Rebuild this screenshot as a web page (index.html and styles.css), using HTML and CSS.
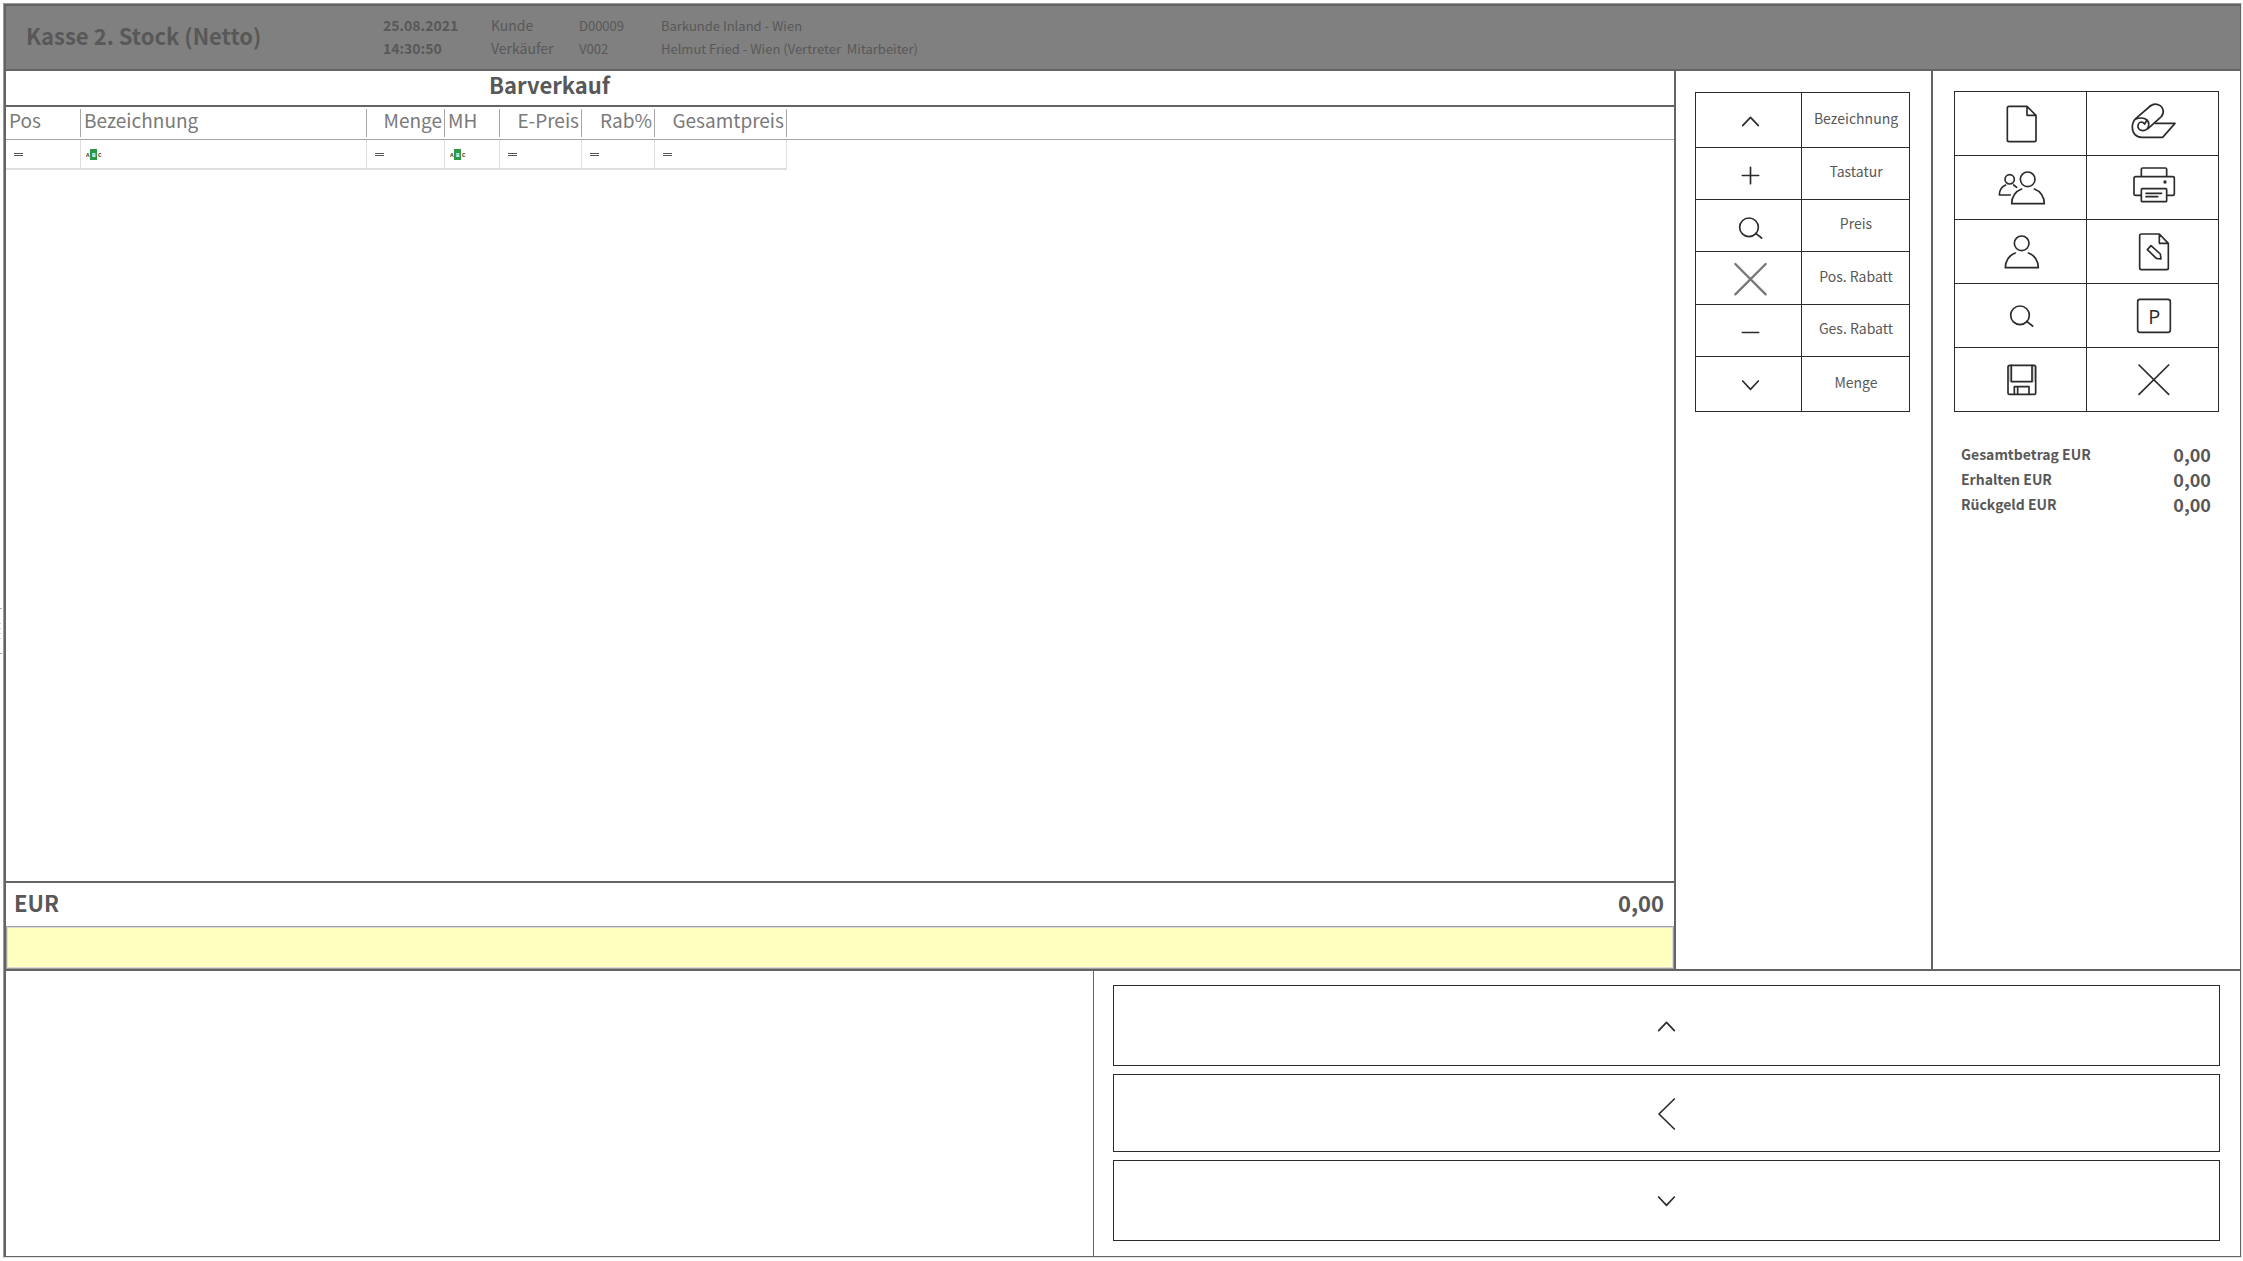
FILE: index.html
```html
<!DOCTYPE html>
<html lang="de">
<head>
<meta charset="utf-8">
<title>Kasse 2. Stock (Netto)</title>
<link rel="stylesheet" href="styles.css">
</head>
<body>
<svg class="defs" aria-hidden="true">
  <symbol id="i-search" viewBox="0 0 147 147"><circle cx="69" cy="73" r="28"/><path d="M89 91L107 105"/></symbol>
  <symbol id="i-up" viewBox="0 0 147 147"><path d="M50 86L73.500 61L97 86"/></symbol>
  <symbol id="i-down" viewBox="0 0 147 147"><path d="M50 60L73.500 85L97 60"/></symbol>
  <symbol id="i-equals" viewBox="0 0 9 3"><path class="solid" d="M0 0H9V1H0ZM0 2H9V3H0Z"/></symbol>
</svg>
<div class="splitter"><i></i><i></i><i></i><i></i></div>
<div class="frame">
  <header class="topbar">
    <h1>Kasse 2. Stock (Netto)</h1>
    <div class="info">
      <b>25.08.2021</b><span>Kunde</span><span class="small">D00009</span><span class="small">Barkunde Inland - Wien</span>
      <b>14:30:50</b><span>Verkäufer</span><span class="small">V002</span><span class="small">Helmut Fried - Wien (Vertreter&nbsp; Mitarbeiter)</span>
    </div>
  </header>

  <main class="work">
    <section class="sale">
      <h2>Barverkauf</h2>
      <div class="positions">
        <table>
          <colgroup><col class="c-pos"><col class="c-name"><col class="c-qty"><col class="c-mh"><col class="c-price"><col class="c-disc"><col class="c-total"><col></colgroup>
          <thead>
            <tr>
              <th><span>Pos</span></th><th><span>Bezeichnung</span></th><th class="num"><span>Menge</span></th><th><span>MH</span></th><th class="num"><span>E-Preis</span></th><th class="num"><span>Rab%</span></th><th class="num"><span>Gesamtpreis</span></th><th></th>
            </tr>
          </thead>
          <tbody>
            <tr>
              <td><svg class="eq"><use href="#i-equals"/></svg></td>
              <td><svg class="abc" viewBox="0 0 16 11"><rect class="green" x="4" width="7" height="11"/><text x="0" y="8">A</text><text class="on" x="6" y="8">B</text><text x="12" y="8">C</text></svg></td>
              <td><svg class="eq"><use href="#i-equals"/></svg></td>
              <td><svg class="abc" viewBox="0 0 16 11"><rect class="green" x="4" width="7" height="11"/><text x="0" y="8">A</text><text class="on" x="6" y="8">B</text><text x="12" y="8">C</text></svg></td>
              <td><svg class="eq"><use href="#i-equals"/></svg></td>
              <td><svg class="eq"><use href="#i-equals"/></svg></td>
              <td><svg class="eq"><use href="#i-equals"/></svg></td>
              <td class="rest"></td>
            </tr>
          </tbody>
        </table>
      </div>
      <div class="sum"><span>EUR</span><span>0,00</span></div>
      <input class="entry" type="text" aria-label="Eingabe">
    </section>

    <aside class="edit">
      <div class="keys">
        <button class="k" aria-label="Nach oben"><svg class="icon"><use href="#i-up"/></svg></button><button>Bezeichnung</button>
        <button class="k" aria-label="Plus"><svg class="icon" viewBox="0 0 147 147"><path d="M49 73.500H98M73.500 49V98"/></svg></button><button>Tastatur</button>
        <button class="k" aria-label="Suchen"><svg class="icon"><use href="#i-search"/></svg></button><button>Preis</button>
        <button class="k" aria-label="Löschen"><svg class="icon soft" viewBox="0 0 147 147"><path d="M28 27L119 118M119 27L28 118"/></svg></button><button>Pos. Rabatt</button>
        <button class="k" aria-label="Minus"><svg class="icon" viewBox="0 0 147 147"><path d="M49 73.500H98"/></svg></button><button>Ges. Rabatt</button>
        <button class="k" aria-label="Nach unten"><svg class="icon"><use href="#i-down"/></svg></button><button>Menge</button>
      </div>
    </aside>

    <aside class="actions">
      <div class="tiles">
        <button aria-label="Neu"><svg class="icon" viewBox="0 0 147 147"><path d="M36 22H90L117 49V123a5 5 0 0 1-5 5H36a5 5 0 0 1-5-5V27a5 5 0 0 1 5-5ZM90 22V49H117"/></svg></button>
        <button aria-label="Bonrolle"><svg class="icon" viewBox="0 0 147 147"><path d="M64 21L20 59C13 66 10 75 10 85C10 103 22 115 38 115H101L138 73H78"/><path d="M64 21C71 15 80 14 88 17C104 23 107 42 97 53L57 89"/><path d="M20 60C32 56 46 56 54 63C62 70 60 85 54 90C47 97 34 96 29 89C24 81 28 70 36 69C41 69 45 72 47 75L54 63"/></svg></button>
        <button aria-label="Kunden"><svg class="icon" viewBox="0 0 147 147"><circle cx="92" cy="49" r="22"/><path d="M74 78C56 84 44 102 44 122H142C142 102 130 84 112 78"/><circle cx="38" cy="49" r="14"/><path d="M26 66C14 71 7 82 7 96H40M50 66L59 73"/></svg></button>
        <button aria-label="Drucken"><svg class="icon" viewBox="0 0 147 147"><path d="M37 41V19a4 4 0 0 1 4-4H109a4 4 0 0 1 4 4V41M37 97H20a5 5 0 0 1-5-5V46a5 5 0 0 1 5-5H131a5 5 0 0 1 5 5V92a5 5 0 0 1-5 5H113"/><rect x="37" y="77" width="76" height="39" rx="3"/><path d="M51 91H98M51 101H86"/><circle class="solid" cx="108" cy="57" r="5"/></svg></button>
        <button aria-label="Verkäufer"><svg class="icon" viewBox="0 0 147 147"><circle cx="74" cy="49" r="22"/><path d="M55 78C37 84 25 102 25 122H124C124 102 112 84 94 78"/></svg></button>
        <button aria-label="Beleg bearbeiten"><svg class="icon" viewBox="0 0 147 147"><path d="M37 21H91L118 49V123a5 5 0 0 1-5 5H37a5 5 0 0 1-5-5V26a5 5 0 0 1 5-5ZM91 21V49H118M66 56L94 81L96 96L82 94L55 68Z"/></svg></button>
        <button aria-label="Suchen"><svg class="icon"><use href="#i-search"/></svg></button>
        <button aria-label="Parken"><svg class="icon" viewBox="0 0 147 147"><rect x="26" y="25" width="98" height="99" rx="7"/><text x="76" y="99">P</text></svg></button>
        <button aria-label="Speichern"><svg class="icon" viewBox="0 0 147 147"><path class="shade" d="M35 33H43V80H35ZM105 33H114V80H105Z"/><rect x="33" y="31" width="83" height="87" rx="5"/><path d="M43 31V80H105V31M52 118V95H96V118M62 95V118"/></svg></button>
        <button aria-label="Abbrechen"><svg class="icon" viewBox="0 0 147 147"><path d="M30 30L119 118M119 30L30 118"/></svg></button>
      </div>
      <dl class="totals">
        <div><dt>Gesamtbetrag EUR</dt><dd>0,00</dd></div>
        <div><dt>Erhalten EUR</dt><dd>0,00</dd></div>
        <div><dt>Rückgeld EUR</dt><dd>0,00</dd></div>
      </dl>
    </aside>
  </main>

  <footer class="lower">
    <section class="blank"></section>
    <nav class="pager">
      <button aria-label="Nach oben"><svg class="icon"><use href="#i-up"/></svg></button>
      <button aria-label="Zurück"><svg class="icon" viewBox="0 0 147 147"><path d="M97 27L51 72L97 117"/></svg></button>
      <button aria-label="Nach unten"><svg class="icon"><use href="#i-down"/></svg></button>
    </nav>
  </footer>
</div>
</body>
</html>
```
FILE: styles.css
```css
:root {
  --line: #646464;
  --ink: #2b2b2b;
  --text: #585858;
}

* { box-sizing: border-box; }

body {
  margin: 0;
  min-height: 100vh;
  display: flex;
  padding: 3px 1px 3px 0;
  background: #fff;
  color: var(--text);
  font: 14px/24px "Noto Sans CJK SC", "Noto Sans", sans-serif;
  font-variant-ligatures: none;
}

h1, h2, dl, dd { margin: 0; }

button {
  margin: 0;
  padding: 0;
  border: 0;
  background: #fff;
  color: inherit;
  font: inherit;
  cursor: pointer;
}

.defs { position: absolute; width: 0; height: 0; }

.icon {
  display: block;
  width: 49px;
  height: 49px;
  margin: 0 auto;
  fill: none;
  stroke: var(--ink);
  stroke-width: 5;
  stroke-linecap: round;
  stroke-linejoin: round;
}
.icon.soft { stroke: #777; stroke-width: 7; }
.icon .solid { fill: var(--ink); stroke: none; }
.icon .shade { fill: #ccc; stroke: none; }
.icon text {
  fill: var(--ink);
  stroke: none;
  font: 60px "Open Sans", sans-serif;
  text-anchor: middle;
}

/* handle between this window and its left neighbour */
.splitter {
  align-self: center;
  display: flex;
  flex-direction: column;
  justify-content: center;
  gap: 4px;
  width: 2px;
  height: 46px;
  margin-right: 1px;
  border: solid #aaa;
  border-width: 1px 0;
}
.splitter i { width: 1px; height: 1px; background: #ccc; }

.frame {
  flex: 1;
  display: flex;
  flex-direction: column;
  border: 1px solid #9a9a9a;
  border-right-color: #e3e3e3;
  border-bottom-color: #e3e3e3;
}

.topbar {
  display: flex;
  align-items: center;
  height: 67px;
  padding: 0 0 2px 20px;
  border: 2px solid var(--line);
  border-right-width: 1px;
  background: #808080;
}
.topbar h1 {
  width: 357px;
  padding-bottom: 4px;
  font-size: 22px;
  line-height: 28px;
}
.info {
  display: grid;
  grid-template-columns: 108px 88px 82px auto;
  line-height: 23px;
}
.small { font-size: 13px; }

.work {
  flex: 1;
  display: flex;
  border: solid var(--line);
  border-width: 0 1px 2px 2px;
}

.sale {
  flex: 1;
  display: flex;
  flex-direction: column;
  border-right: 2px solid var(--line);
}
.sale h2 {
  height: 36px;
  padding-left: 483px;
  border-bottom: 2px solid var(--line);
  font-size: 22px;
  line-height: 26px;
}
.positions { flex: 1; }

table {
  width: 100%;
  table-layout: fixed;
  border-spacing: 0;
}
.c-pos { width: 75px; }
.c-name { width: 286px; }
.c-qty { width: 78px; }
.c-mh { width: 55px; }
.c-price { width: 82px; }
.c-disc { width: 73px; }
.c-total { width: 132px; }

th {
  height: 33px;
  padding: 0;
  border-bottom: 1px solid #a6a6a6;
  color: #7a7a7a;
  font-size: 19px;
  font-weight: 400;
  line-height: 22px;
  text-align: left;
}
th span {
  display: block;
  height: 28px;
  padding: 0 2px 0 3px;
  border-right: 1px solid #a6a6a6;
}
th.num { text-align: right; }

td {
  height: 30px;
  padding: 0 0 0 8px;
  border: solid #dedede;
  border-width: 0 1px 2px 0;
}
td:has(.abc) { padding-left: 5px; }
td.rest { border: 0; }
td svg { display: block; }
.eq { width: 9px; height: 3px; fill: #555; }
.abc {
  width: 16px;
  height: 11px;
  fill: #444;
  font: bold 6px "Liberation Mono", monospace;
}
.green { fill: #2f9648; }
.on { fill: #fff; }

.sum {
  display: flex;
  justify-content: space-between;
  height: 45px;
  padding: 3px 10px 0 8px;
  border-top: 2px solid var(--line);
  font-size: 22px;
  font-weight: 700;
  line-height: 32px;
}
.entry {
  width: 100%;
  height: 43px;
  padding: 0 8px;
  border: 1px solid #a0a0a0;
  box-shadow: inset 0 0 0 1px #dcdcdc;
  background: #ffffc0;
  color: inherit;
  font: inherit;
}

.edit {
  width: 257px;
  padding: 21px 21px 0 19px;
  border-right: 2px solid var(--line);
}
.keys, .tiles {
  display: grid;
  gap: 1px;
  padding: 1px;
  background: var(--ink);
}
.keys {
  grid-template-columns: 105px 1fr;
  grid-template-rows: 54px 51px 51px 52px 51px 54px;
}
.keys button {
  padding: 0 0 5px 1px;
  overflow: hidden;
}
.keys .k { padding: 3px 0 0 3px; }

.actions {
  width: 307px;
  padding: 20px 21px 0;
}
.tiles {
  grid-template-columns: 1fr 1fr;
  grid-auto-rows: 63px;
}
.tiles button { padding-left: 1px; }

.totals {
  padding: 30px 8px 0 7px;
  font-weight: 700;
}
.totals div {
  display: flex;
  justify-content: space-between;
  height: 25px;
}
.totals dd { font-size: 18px; }

.lower {
  display: flex;
  border: solid var(--line);
  border-width: 0 1px 1px 2px;
}
.blank { width: 1088px; border-right: 1px solid var(--line); }
.pager {
  flex: 1;
  display: grid;
  grid-template-rows: 81px 78px 81px;
  gap: 8px;
  padding: 14px 20px 15px 19px;
}
.pager button { padding-top: 2px; border: 1px solid var(--ink); }
```
